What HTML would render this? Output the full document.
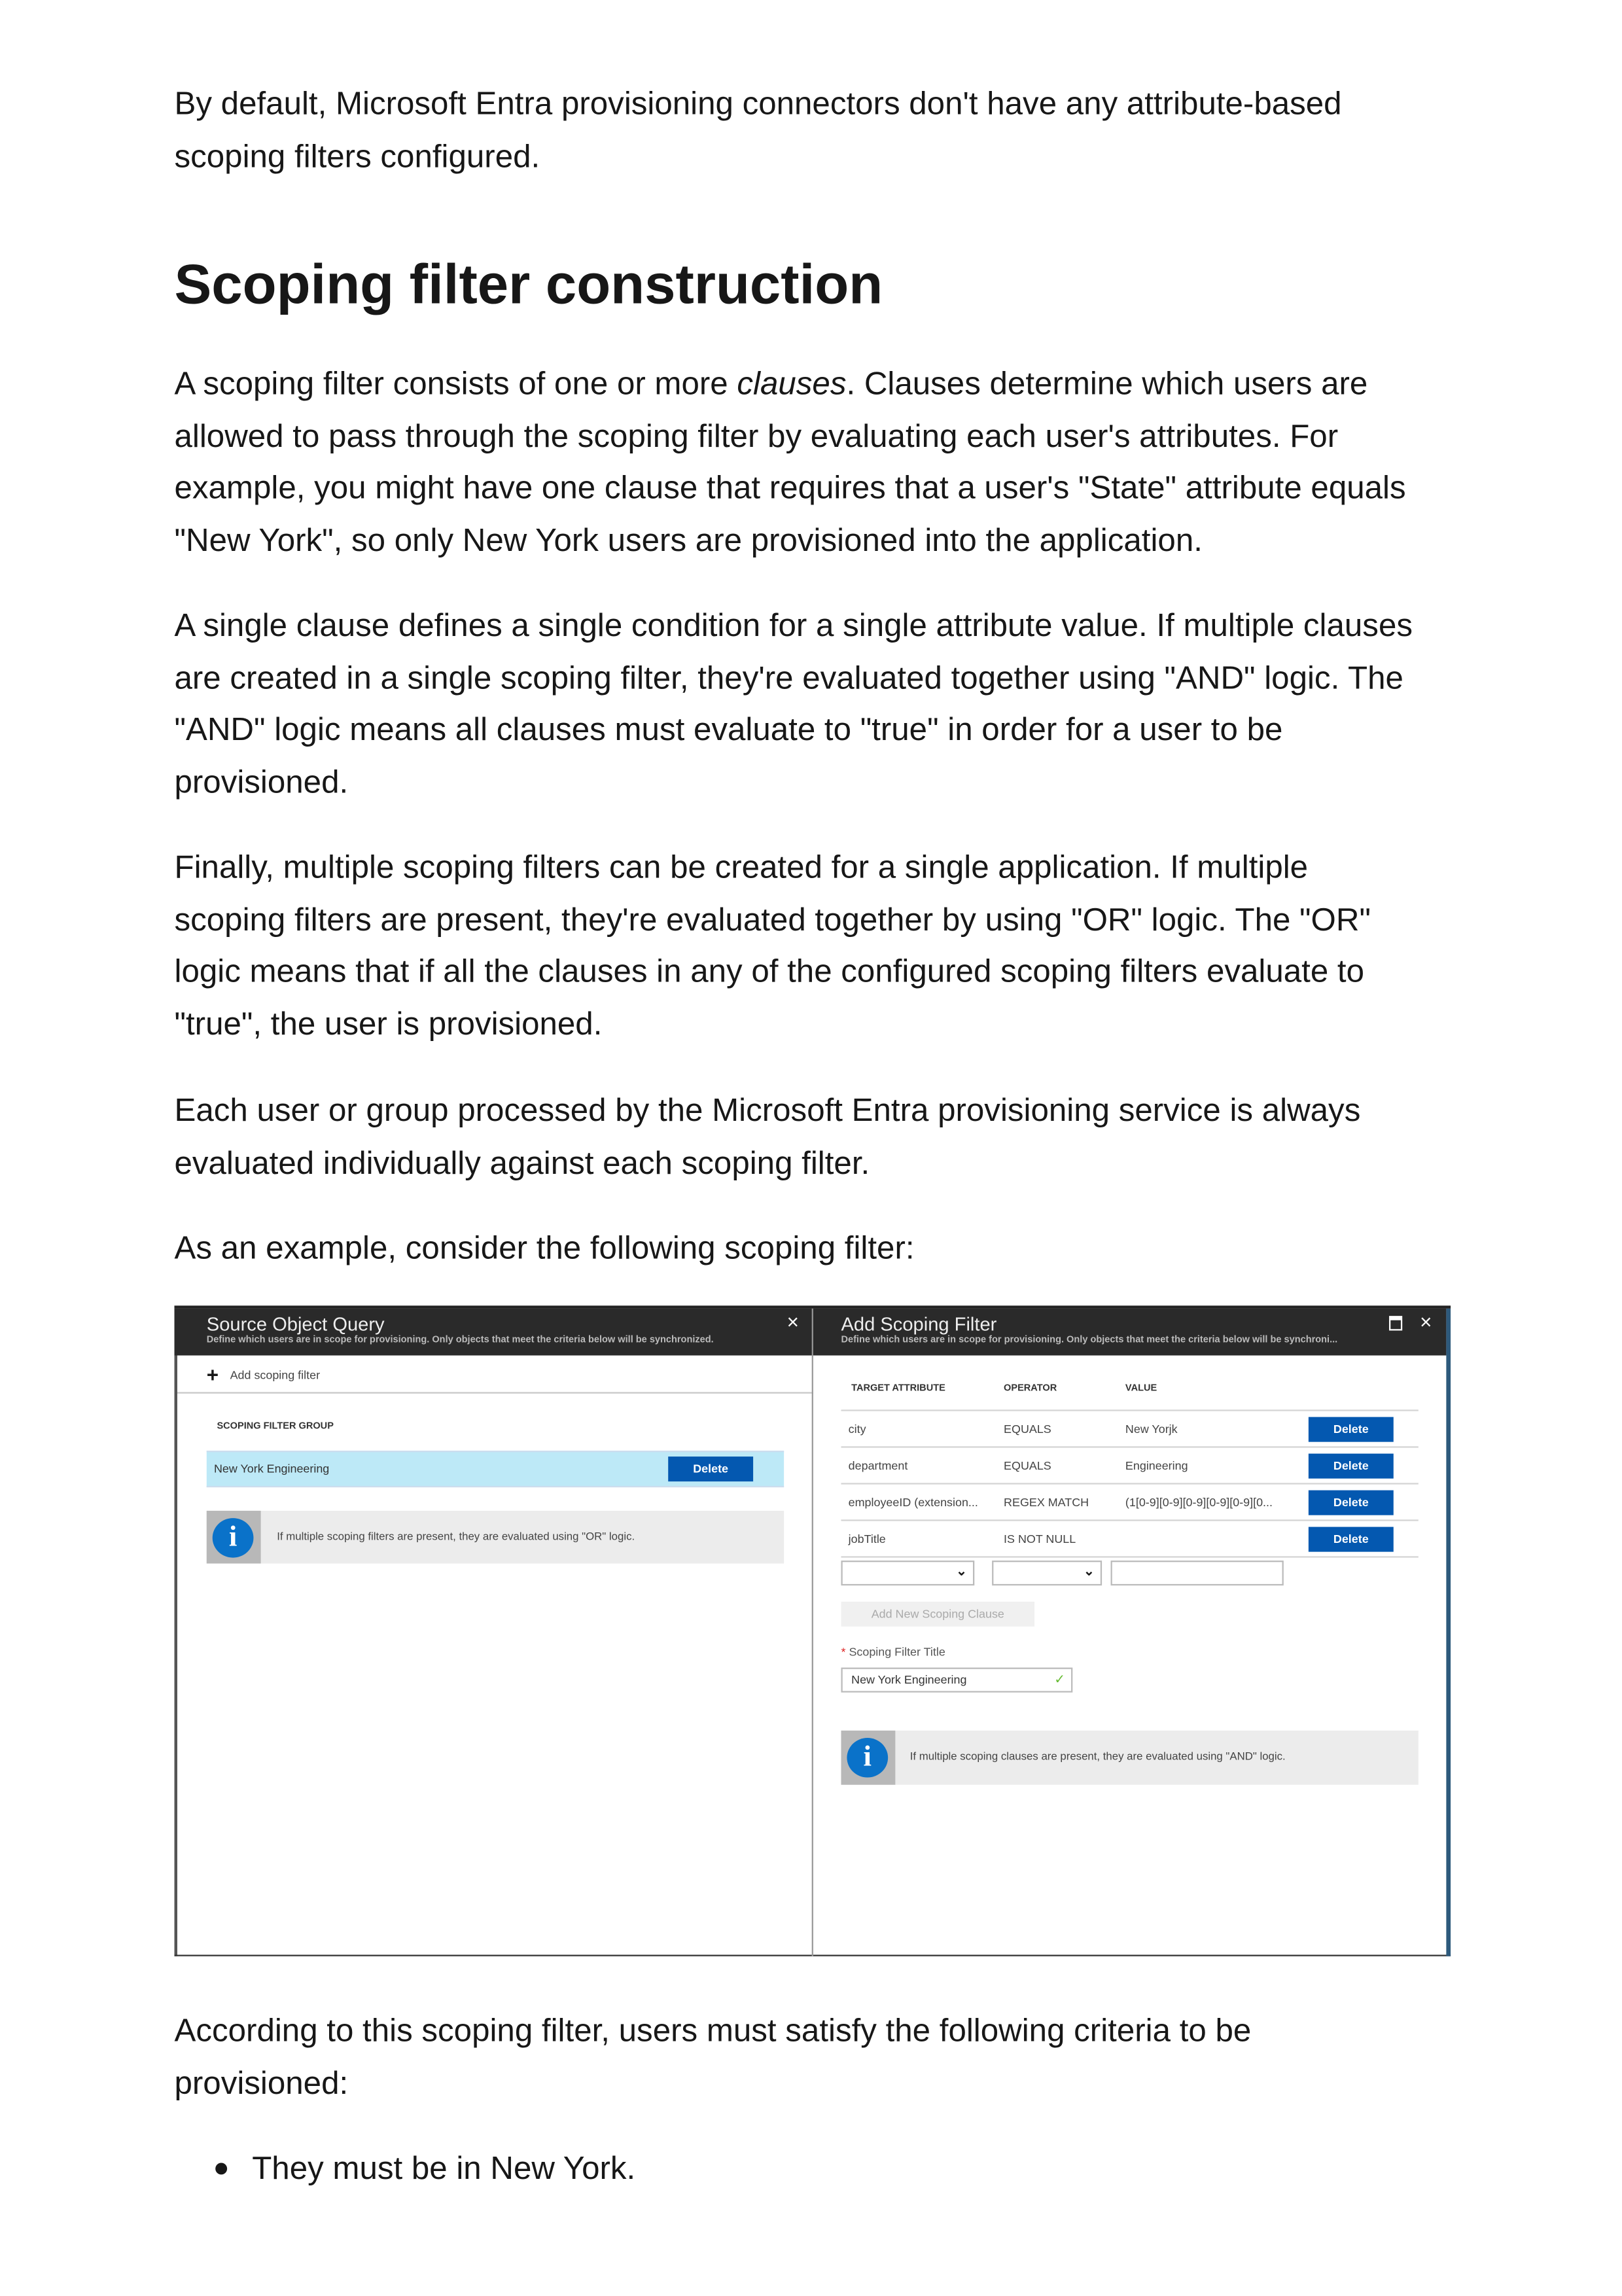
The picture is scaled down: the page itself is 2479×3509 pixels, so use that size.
<!DOCTYPE html>
<html><head><meta charset="utf-8"><style>
html,body{margin:0;padding:0;background:#fff;width:2479px;height:3508px;overflow:hidden}
#s{position:absolute;left:0;top:0;width:1107px;height:1567px;transform:scale(2.2395);transform-origin:0 0;font-family:"Liberation Sans",sans-serif;color:#171717}
.p{position:absolute;left:119px;font-size:22px;line-height:35.6px;white-space:nowrap}
.a{position:absolute;white-space:nowrap}
.n{font-family:"Liberation Sans Narrow","Liberation Sans",sans-serif}
.del{position:absolute;background:#0458b0;color:#fff;font-weight:bold;font-size:8px;text-align:center;font-family:"Liberation Sans Narrow","Liberation Sans",sans-serif}
.hl{position:absolute;height:1px;background:#d4d4d4}
</style></head><body><div id="s">
<div class="p" style="top:53px">By default, Microsoft Entra provisioning connectors don't have any attribute-based<br>scoping filters configured.</div>
<div class="a" style="left:119px;top:170px;font-size:38px;font-weight:bold;line-height:50px">Scoping filter construction</div>
<div class="p" style="top:244px">A scoping filter consists of one or more <i>clauses</i>. Clauses determine which users are<br>allowed to pass through the scoping filter by evaluating each user's attributes. For<br>example, you might have one clause that requires that a user's "State" attribute equals<br>"New York", so only New York users are provisioned into the application.</div>
<div class="p" style="top:409px">A single clause defines a single condition for a single attribute value. If multiple clauses<br>are created in a single scoping filter, they're evaluated together using "AND" logic. The<br>"AND" logic means all clauses must evaluate to "true" in order for a user to be<br>provisioned.</div>
<div class="p" style="top:574px">Finally, multiple scoping filters can be created for a single application. If multiple<br>scoping filters are present, they're evaluated together by using "OR" logic. The "OR"<br>logic means that if all the clauses in any of the configured scoping filters evaluate to<br>"true", the user is provisioned.</div>
<div class="p" style="top:740px">Each user or group processed by the Microsoft Entra provisioning service is always<br>evaluated individually against each scoping filter.</div>
<div class="p" style="top:834px">As an example, consider the following scoping filter:</div>

<div class="a n" style="left:119px;top:891px;width:871px;height:444px;background:#fff;border-top:2px solid #222;box-sizing:border-box">
  <div class="a" style="left:0;top:0;width:2px;height:442px;background:#555"></div>
  <div class="a" style="left:0;top:441px;width:871px;height:1px;background:#333"></div>
  <div class="a" style="left:0;top:0;width:436px;height:32px;background:#2a2a2a"></div>
  <div class="a" style="left:22px;top:3px;color:#eee;font-size:13px">Source Object Query</div>
  <div class="a" style="left:22px;top:18px;color:#bbb;font-size:6.5px;font-weight:bold">Define which users are in scope for provisioning. Only objects that meet the criteria below will be synchronized.</div>
  <div class="a" style="left:418px;top:1px;color:#fff;font-size:14px">×</div>
  <div class="a" style="left:22px;top:38px;font-size:14px;font-weight:bold;line-height:14px">+</div>
  <div class="a" style="left:38px;top:41px;font-size:8px;color:#444">Add scoping filter</div>
  <div class="hl" style="left:2px;top:57px;width:434px;background:#c8c8c8"></div>
  <div class="a" style="left:29px;top:77px;font-size:6.5px;font-weight:bold;color:#333">SCOPING FILTER GROUP</div>
  <div class="a" style="left:22px;top:97px;width:394px;height:25px;background:#bde9f7;border-top:1px solid #cde;border-bottom:1px solid #cde;box-sizing:border-box"></div>
  <div class="a" style="left:27px;top:105px;font-size:8px;color:#333">New York Engineering</div>
  <div class="del" style="left:337px;top:101px;width:58px;height:17px;line-height:17px">Delete</div>
  <div class="a" style="left:22px;top:138px;width:394px;height:36px;background:#ececec"></div>
  <div class="a" style="left:22px;top:138px;width:37px;height:36px;background:#b8b8b8"></div>
  <div class="a" style="left:26px;top:143px;width:28px;height:27px;border-radius:50%;background:#0a72c9;color:#fff;font-weight:bold;font-size:20px;text-align:center;line-height:27px;font-family:'Liberation Serif',serif">i</div>
  <div class="a" style="left:70px;top:151px;font-size:7.5px;color:#444">If multiple scoping filters are present, they are evaluated using "OR" logic.</div>
  <div class="a" style="left:435px;top:0;width:1px;height:442px;background:#999"></div>
  <div class="a" style="left:436px;top:0;width:432px;height:32px;background:#2a2a2a"></div>
  <div class="a" style="left:868px;top:0;width:3px;height:442px;background:#2e5a7c"></div>
  <div class="a" style="left:455px;top:3px;color:#eee;font-size:13px">Add Scoping Filter</div>
  <div class="a" style="left:455px;top:18px;color:#bbb;font-size:6.5px;font-weight:bold">Define which users are in scope for provisioning. Only objects that meet the criteria below will be synchroni...</div>
  <div class="a" style="left:829px;top:5px;width:7px;height:6px;border:1.5px solid #fff;border-top-width:3px"></div>
  <div class="a" style="left:850px;top:1px;color:#fff;font-size:14px">×</div>
  <div class="a" style="left:462px;top:51px;font-size:6.5px;font-weight:bold;color:#333">TARGET ATTRIBUTE</div>
  <div class="a" style="left:566px;top:51px;font-size:6.5px;font-weight:bold;color:#333">OPERATOR</div>
  <div class="a" style="left:649px;top:51px;font-size:6.5px;font-weight:bold;color:#333">VALUE</div>
  <div class="hl" style="left:455px;top:69px;width:394px"></div>
  <div class="hl" style="left:455px;top:94px;width:394px"></div>
  <div class="hl" style="left:455px;top:119px;width:394px"></div>
  <div class="hl" style="left:455px;top:144px;width:394px"></div>
  <div class="hl" style="left:455px;top:169px;width:394px"></div>
  <div class="a" style="left:460px;top:78px;font-size:8px;color:#444">city</div>
  <div class="a" style="left:566px;top:78px;font-size:8px;color:#444">EQUALS</div>
  <div class="a" style="left:649px;top:78px;font-size:8px;color:#444">New Yorjk</div>
  <div class="a" style="left:460px;top:103px;font-size:8px;color:#444">department</div>
  <div class="a" style="left:566px;top:103px;font-size:8px;color:#444">EQUALS</div>
  <div class="a" style="left:649px;top:103px;font-size:8px;color:#444">Engineering</div>
  <div class="a" style="left:460px;top:128px;font-size:8px;color:#444">employeeID (extension...</div>
  <div class="a" style="left:566px;top:128px;font-size:8px;color:#444">REGEX MATCH</div>
  <div class="a" style="left:649px;top:128px;font-size:8px;color:#444">(1[0-9][0-9][0-9][0-9][0-9][0...</div>
  <div class="a" style="left:460px;top:153px;font-size:8px;color:#444">jobTitle</div>
  <div class="a" style="left:566px;top:153px;font-size:8px;color:#444">IS NOT NULL</div>
  <div class="del" style="left:774px;top:74px;width:58px;height:17px;line-height:17px">Delete</div>
  <div class="del" style="left:774px;top:99px;width:58px;height:17px;line-height:17px">Delete</div>
  <div class="del" style="left:774px;top:124px;width:58px;height:17px;line-height:17px">Delete</div>
  <div class="del" style="left:774px;top:149px;width:58px;height:17px;line-height:17px">Delete</div>
  <div class="a" style="left:455px;top:172px;width:91px;height:17px;border:1px solid #bbb;box-sizing:border-box"><span style="position:absolute;right:4px;top:1px;font-size:9px;font-weight:bold">⌄</span></div>
  <div class="a" style="left:558px;top:172px;width:75px;height:17px;border:1px solid #bbb;box-sizing:border-box"><span style="position:absolute;right:4px;top:1px;font-size:9px;font-weight:bold">⌄</span></div>
  <div class="a" style="left:639px;top:172px;width:118px;height:17px;border:1px solid #bbb;box-sizing:border-box"></div>
  <div class="a" style="left:455px;top:200px;width:132px;height:17px;background:#f0f0f0;color:#aaa;font-size:8px;text-align:center;line-height:17px">Add New Scoping Clause</div>
  <div class="a" style="left:455px;top:230px;font-size:8px;color:#555"><span style="color:#d22">*</span> Scoping Filter Title</div>
  <div class="a" style="left:455px;top:245px;width:158px;height:17px;border:1px solid #bbb;box-sizing:border-box;font-size:8px;color:#333;line-height:15px;padding-left:6px">New York Engineering<span style="position:absolute;right:4px;color:#6b3;font-size:9px">✓</span></div>
  <div class="a" style="left:455px;top:288px;width:394px;height:37px;background:#ececec"></div>
  <div class="a" style="left:455px;top:288px;width:37px;height:37px;background:#b8b8b8"></div>
  <div class="a" style="left:459px;top:293px;width:28px;height:27px;border-radius:50%;background:#0a72c9;color:#fff;font-weight:bold;font-size:20px;text-align:center;line-height:27px;font-family:'Liberation Serif',serif">i</div>
  <div class="a" style="left:502px;top:301px;font-size:7.5px;color:#444">If multiple scoping clauses are present, they are evaluated using "AND" logic.</div>
</div>

<div class="p" style="top:1368px">According to this scoping filter, users must satisfy the following criteria to be<br>provisioned:</div>
<div class="a" style="left:147px;top:1476px;width:8px;height:8px;border-radius:50%;background:#171717"></div>
<div class="p" style="left:172px;top:1462px">They must be in New York.</div>
</div></body></html>
